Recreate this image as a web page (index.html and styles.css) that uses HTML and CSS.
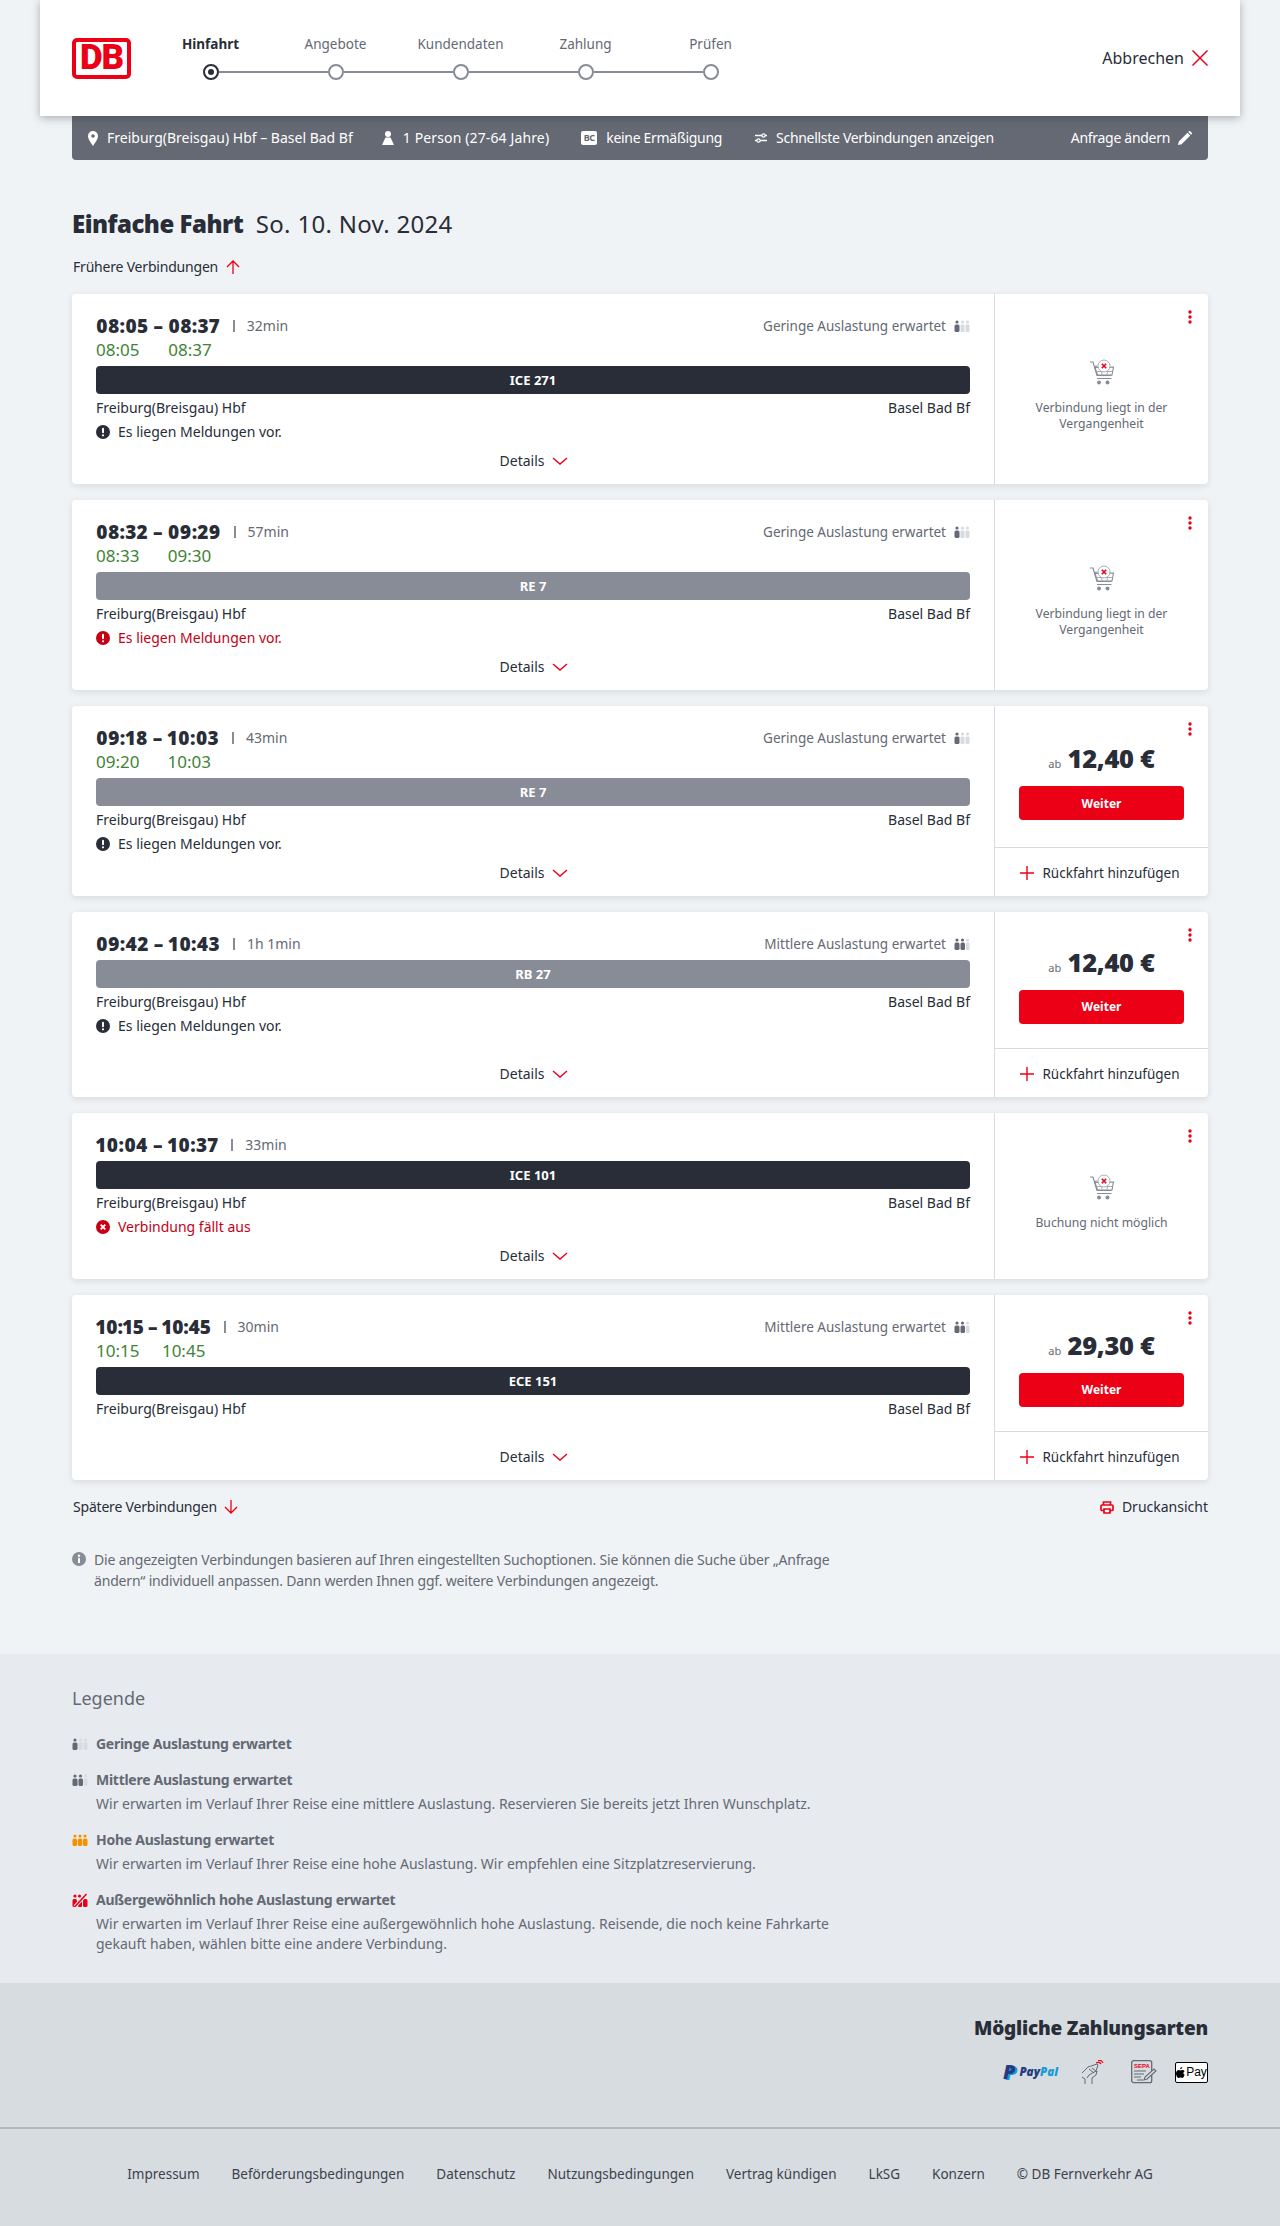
FILE: index.html
```html
<!DOCTYPE html>
<html lang="de">
<head>
    <meta charset="UTF-8">
    <meta name="viewport" content="width=device-width, initial-scale=1.0">
    <title>Einfache Fahrt</title>
    <link rel="stylesheet" href="styles.css">
</head>
<body>
    <svg class="sprites" aria-hidden="true">
        <symbol id="load-1" viewBox="0 0 16 12">
            <circle cx="3" cy="2" r="1.6" fill="#646973"/><rect x="0.5" y="4.5" width="5" height="7.5" rx="1.5" fill="#646973"/>
            <circle cx="8.5" cy="2" r="1.6" fill="#d7dce1"/><rect x="6.5" y="4.5" width="4" height="7.5" rx="1" fill="#d7dce1"/>
            <circle cx="13.5" cy="2" r="1.6" fill="#d7dce1"/><rect x="11.5" y="4.5" width="4" height="7.5" rx="1" fill="#d7dce1"/>
        </symbol>
        <symbol id="load-2" viewBox="0 0 16 12">
            <circle cx="3" cy="2" r="1.6" fill="#646973"/><rect x="0.5" y="4.5" width="5" height="7.5" rx="1.5" fill="#646973"/>
            <circle cx="8.5" cy="2" r="1.6" fill="#646973"/><rect x="6.5" y="4.5" width="4.5" height="7.5" rx="1.5" fill="#646973"/>
            <circle cx="13.5" cy="2" r="1.6" fill="#d7dce1"/><rect x="12" y="4.5" width="3.5" height="7.5" rx="1" fill="#d7dce1"/>
        </symbol>
        <symbol id="load-3" viewBox="0 0 16 12">
            <circle cx="3" cy="2" r="1.6" fill="#f39200"/><rect x="0.5" y="4.5" width="4.5" height="7.5" rx="1.5" fill="#f39200"/>
            <circle cx="8" cy="2" r="1.6" fill="#f39200"/><rect x="5.8" y="4.5" width="4.5" height="7.5" rx="1.5" fill="#f39200"/>
            <circle cx="13" cy="2" r="1.6" fill="#f39200"/><rect x="11" y="4.5" width="4.5" height="7.5" rx="1.5" fill="#f39200"/>
        </symbol>
        <symbol id="load-4" viewBox="0 0 16 14">
            <circle cx="3" cy="3" r="1.6" fill="#ec0016"/><rect x="0.5" y="6" width="4.5" height="8" rx="1.5" fill="#ec0016"/>
            <circle cx="7.5" cy="3" r="1.6" fill="#ec0016"/><rect x="6" y="7" width="4" height="7" rx="1" fill="#ec0016"/>
            <rect x="11" y="6" width="4.5" height="8" rx="1.5" fill="#ec0016"/>
            <path d="M3 13.5 14.5 1" stroke="#e7ebf0" stroke-width="3.4"/><path d="M3 13.5 14.5 1" stroke="#ec0016" stroke-width="1.6"/>
        </symbol>
        <symbol id="kebab" viewBox="0 0 4 14">
            <circle cx="2" cy="2" r="1.7" fill="#ec0016"/><circle cx="2" cy="7" r="1.7" fill="#ec0016"/><circle cx="2" cy="12" r="1.7" fill="#ec0016"/>
        </symbol>
        <symbol id="chevron" viewBox="0 0 16 8">
            <path d="M1 1l7 6 7-6" fill="none" stroke="#ec0016" stroke-width="1.4"/>
        </symbol>
        <symbol id="plus" viewBox="0 0 14 14">
            <path d="M7 0v14M0 7h14" stroke="#ec0016" stroke-width="1.4"/>
        </symbol>
        <symbol id="alert" viewBox="0 0 14 14">
            <circle cx="7" cy="7" r="7" fill="currentColor"/>
            <rect x="6" y="2.8" width="2" height="5.4" rx="1" fill="#fff"/><circle cx="7" cy="10.3" r="1.1" fill="#fff"/>
        </symbol>
        <symbol id="cancelled" viewBox="0 0 14 14">
            <circle cx="7" cy="7" r="7" fill="currentColor"/>
            <path d="M4.7 4.7l4.6 4.6M9.3 4.7L4.7 9.3" stroke="#fff" stroke-width="1.8"/>
        </symbol>
        <symbol id="cart" viewBox="0 0 26 26">
            <path d="M1 3h3l4 13.5h14.5M22.5 19.5H8" fill="none" stroke="#878c96" stroke-width="1.2"/>
            <path d="M5.5 7.5l3-.5M24.5 8l-1.5 8H8.5L6 8.500z" fill="none" stroke="#878c96" stroke-width="1.1"/>
            <path d="M7.500 12.500h15.500M12 8.500l1 7.500M19 8.500l-1 7.500" fill="none" stroke="#a8adb5" stroke-width="1"/>
            <circle cx="10" cy="23.500" r="2" fill="#878c96"/><circle cx="18.500" cy="23.500" r="2" fill="#878c96"/>
            <circle cx="15" cy="7" r="6" fill="#fff" stroke="#a8adb5"/>
            <path d="M12.800 4.800l4.400 4.400M17.200 4.800l-4.400 4.400" stroke="#ec0016" stroke-width="1.600"/>
        </symbol>
    </svg>

    <div class="top-header">
        <div class="db-logo"><span>DB</span></div>
        <div class="stepper">
            <div class="step active"><span class="step-label">Hinfahrt</span><span class="step-dot"></span></div>
            <div class="step"><span class="step-label">Angebote</span><span class="step-dot"></span></div>
            <div class="step"><span class="step-label">Kundendaten</span><span class="step-dot"></span></div>
            <div class="step"><span class="step-label">Zahlung</span><span class="step-dot"></span></div>
            <div class="step"><span class="step-label">Prüfen</span><span class="step-dot"></span></div>
        </div>
        <a class="cancel-link">Abbrechen
            <svg width="16" height="16" viewBox="0 0 16 16"><path d="M.5.5l15 15M15.500.5l-15 15" stroke="#ec0016" stroke-width="1.500"/></svg>
        </a>
    </div>

    <div class="search-bar">
        <span class="bar-item route-item">
            <svg width="10" height="15" viewBox="0 0 10 15"><path fill-rule="evenodd" d="M5 0a5 5 0 0 1 5 5c0 3-3 7-5 10C3 12 0 8 0 5a5 5 0 0 1 5-5zm0 3.200a1.800 1.800 0 1 0 0 3.600 1.800 1.800 0 0 0 0-3.600z" fill="#fff"/></svg>
            Freiburg(Breisgau) Hbf – Basel Bad Bf
        </span>
        <span class="bar-item person-item">
            <svg width="12" height="14" viewBox="0 0 12 14"><circle cx="6" cy="3" r="3" fill="#fff"/><path d="M3.500 6.500h5L12 14H0z" fill="#fff"/></svg>
            1 Person (27-64 Jahre)
        </span>
        <span class="bar-item tight-item discount-item">
            <span class="bc-badge">BC</span>
            keine Ermäßigung
        </span>
        <span class="bar-item tight-item">
            <svg width="12" height="10" viewBox="0 0 12 10"><path d="M0 2.500h7M10 2.500h2M0 7.500h2M5 7.500h7" stroke="#fff" stroke-width="1.400"/><circle cx="8.500" cy="2.500" r="1.600" fill="none" stroke="#fff" stroke-width="1.200"/><circle cx="3.500" cy="7.500" r="1.600" fill="none" stroke="#fff" stroke-width="1.200"/></svg>
            Schnellste Verbindungen anzeigen
        </span>
        <a class="bar-change">Anfrage ändern
            <svg width="14" height="14" viewBox="0 0 14 14"><path d="M0 14l.8-3.600L9.500 1.700l2.800 2.800-8.700 8.700zM10.300.9l.6-.6a1 1 0 0 1 1.400 0l1.400 1.400a1 1 0 0 1 0 1.400l-.6.600z" fill="#fff"/></svg>
        </a>
    </div>

    <main class="content">
        <h1 class="page-title"><strong>Einfache Fahrt</strong> So. 10. Nov. 2024</h1>
        <a class="page-link early-link">Frühere Verbindungen
            <svg width="14" height="14" viewBox="0 0 14 14"><path d="M7 14V1M1 7l6-6 6 6" fill="none" stroke="#ec0016" stroke-width="1.300"/></svg>
        </a>

        <div class="card-list">
            <article class="card">
                <div class="card-main">
                    <div class="card-head">
                        <div class="times">
                            <span class="time-dep">08:05 – </span><span class="time-arr">08:37</span>
                            <span class="duration">32min</span>
                            <span class="real">08:05</span><span class="real">08:37</span>
                        </div>
                        <div class="load">Geringe Auslastung erwartet <svg class="load-icon"><use href="#load-1"/></svg></div>
                    </div>
                    <div class="train dark">ICE 271</div>
                    <div class="stations"><span>Freiburg(Breisgau) Hbf</span><span>Basel Bad Bf</span></div>
                    <div class="notice"><svg class="notice-icon"><use href="#alert"/></svg>Es liegen Meldungen vor.</div>
                    <a class="details">Details <svg class="chevron"><use href="#chevron"/></svg></a>
                </div>
                <div class="card-side past">
                    <svg class="kebab"><use href="#kebab"/></svg>
                    <svg class="cart"><use href="#cart"/></svg>
                    <p>Verbindung liegt in der Vergangenheit</p>
                </div>
            </article>

            <article class="card">
                <div class="card-main">
                    <div class="card-head">
                        <div class="times">
                            <span class="time-dep">08:32 – </span><span class="time-arr">09:29</span>
                            <span class="duration">57min</span>
                            <span class="real">08:33</span><span class="real">09:30</span>
                        </div>
                        <div class="load">Geringe Auslastung erwartet <svg class="load-icon"><use href="#load-1"/></svg></div>
                    </div>
                    <div class="train grey">RE 7</div>
                    <div class="stations"><span>Freiburg(Breisgau) Hbf</span><span>Basel Bad Bf</span></div>
                    <div class="notice red"><svg class="notice-icon"><use href="#alert"/></svg>Es liegen Meldungen vor.</div>
                    <a class="details">Details <svg class="chevron"><use href="#chevron"/></svg></a>
                </div>
                <div class="card-side past">
                    <svg class="kebab"><use href="#kebab"/></svg>
                    <svg class="cart"><use href="#cart"/></svg>
                    <p>Verbindung liegt in der Vergangenheit</p>
                </div>
            </article>

            <article class="card">
                <div class="card-main">
                    <div class="card-head">
                        <div class="times">
                            <span class="time-dep">09:18 – </span><span class="time-arr">10:03</span>
                            <span class="duration">43min</span>
                            <span class="real">09:20</span><span class="real">10:03</span>
                        </div>
                        <div class="load">Geringe Auslastung erwartet <svg class="load-icon"><use href="#load-1"/></svg></div>
                    </div>
                    <div class="train grey">RE 7</div>
                    <div class="stations"><span>Freiburg(Breisgau) Hbf</span><span>Basel Bad Bf</span></div>
                    <div class="notice"><svg class="notice-icon"><use href="#alert"/></svg>Es liegen Meldungen vor.</div>
                    <a class="details">Details <svg class="chevron"><use href="#chevron"/></svg></a>
                </div>
                <div class="card-side">
                    <svg class="kebab"><use href="#kebab"/></svg>
                    <div class="offer">
                        <div class="price"><small>ab</small> 12,40 €</div>
                        <button class="btn-next">Weiter</button>
                    </div>
                    <a class="return-link"><svg class="plus"><use href="#plus"/></svg>Rückfahrt hinzufügen</a>
                </div>
            </article>

            <article class="card">
                <div class="card-main">
                    <div class="card-head">
                        <div class="times">
                            <span class="time-dep">09:42 – </span><span class="time-arr">10:43</span>
                            <span class="duration">1h 1min</span>
                        </div>
                        <div class="load">Mittlere Auslastung erwartet <svg class="load-icon"><use href="#load-2"/></svg></div>
                    </div>
                    <div class="train grey">RB 27</div>
                    <div class="stations"><span>Freiburg(Breisgau) Hbf</span><span>Basel Bad Bf</span></div>
                    <div class="notice"><svg class="notice-icon"><use href="#alert"/></svg>Es liegen Meldungen vor.</div>
                    <a class="details">Details <svg class="chevron"><use href="#chevron"/></svg></a>
                </div>
                <div class="card-side">
                    <svg class="kebab"><use href="#kebab"/></svg>
                    <div class="offer">
                        <div class="price"><small>ab</small> 12,40 €</div>
                        <button class="btn-next">Weiter</button>
                    </div>
                    <a class="return-link"><svg class="plus"><use href="#plus"/></svg>Rückfahrt hinzufügen</a>
                </div>
            </article>

            <article class="card">
                <div class="card-main">
                    <div class="card-head">
                        <div class="times">
                            <span class="time-dep">10:04 – </span><span class="time-arr">10:37</span>
                            <span class="duration">33min</span>
                        </div>
                    </div>
                    <div class="train dark">ICE 101</div>
                    <div class="stations"><span>Freiburg(Breisgau) Hbf</span><span>Basel Bad Bf</span></div>
                    <div class="notice red"><svg class="notice-icon"><use href="#cancelled"/></svg>Verbindung fällt aus</div>
                    <a class="details">Details <svg class="chevron"><use href="#chevron"/></svg></a>
                </div>
                <div class="card-side past">
                    <svg class="kebab"><use href="#kebab"/></svg>
                    <svg class="cart"><use href="#cart"/></svg>
                    <p>Buchung nicht möglich</p>
                </div>
            </article>

            <article class="card">
                <div class="card-main">
                    <div class="card-head">
                        <div class="times narrow-times">
                            <span class="time-dep">10:15 – </span><span class="time-arr">10:45</span>
                            <span class="duration">30min</span>
                            <span class="real">10:15</span><span class="real">10:45</span>
                        </div>
                        <div class="load">Mittlere Auslastung erwartet <svg class="load-icon"><use href="#load-2"/></svg></div>
                    </div>
                    <div class="train dark">ECE 151</div>
                    <div class="stations"><span>Freiburg(Breisgau) Hbf</span><span>Basel Bad Bf</span></div>
                    <a class="details">Details <svg class="chevron"><use href="#chevron"/></svg></a>
                </div>
                <div class="card-side">
                    <svg class="kebab"><use href="#kebab"/></svg>
                    <div class="offer">
                        <div class="price"><small>ab</small> 29,30 €</div>
                        <button class="btn-next">Weiter</button>
                    </div>
                    <a class="return-link"><svg class="plus"><use href="#plus"/></svg>Rückfahrt hinzufügen</a>
                </div>
            </article>
        </div>

        <div class="below-cards">
            <a class="page-link">Spätere Verbindungen
                <svg width="14" height="14" viewBox="0 0 14 14"><path d="M7 0v13M1 7l6 6 6-6" fill="none" stroke="#ec0016" stroke-width="1.300"/></svg>
            </a>
            <a class="print-link">
                <svg width="14" height="13" viewBox="0 0 14 13"><path d="M3.500 4V1h7v3M3.500 9.500H2A1 1 0 0 1 1 8.500V5a1 1 0 0 1 1-1h10a1 1 0 0 1 1 1v3.500a1 1 0 0 1-1 1h-1.500M4 8h6v4H4z" fill="none" stroke="#ec0016" stroke-width="1.700"/></svg>
                Druckansicht
            </a>
        </div>

        <div class="info-note">
            <svg width="14" height="14" viewBox="0 0 14 14"><circle cx="7" cy="7" r="7" fill="#878c96"/><circle cx="7" cy="3.700" r="1.200" fill="#fff"/><rect x="6" y="5.800" width="2" height="5.500" rx=".8" fill="#fff"/></svg>
            <p>Die angezeigten Verbindungen basieren auf Ihren eingestellten Suchoptionen. Sie können die Suche über „Anfrage ändern“ individuell anpassen. Dann werden Ihnen ggf. weitere Verbindungen angezeigt.</p>
        </div>
    </main>

    <section class="legend">
        <h2>Legende</h2>
        <div class="legend-item">
            <svg class="legend-icon"><use href="#load-1"/></svg>
            <div><h3>Geringe Auslastung erwartet</h3></div>
        </div>
        <div class="legend-item">
            <svg class="legend-icon"><use href="#load-2"/></svg>
            <div><h3>Mittlere Auslastung erwartet</h3><p>Wir erwarten im Verlauf Ihrer Reise eine mittlere Auslastung. Reservieren Sie bereits jetzt Ihren Wunschplatz.</p></div>
        </div>
        <div class="legend-item">
            <svg class="legend-icon"><use href="#load-3"/></svg>
            <div><h3>Hohe Auslastung erwartet</h3><p>Wir erwarten im Verlauf Ihrer Reise eine hohe Auslastung. Wir empfehlen eine Sitzplatzreservierung.</p></div>
        </div>
        <div class="legend-item">
            <svg class="legend-icon"><use href="#load-4"/></svg>
            <div><h3>Außergewöhnlich hohe Auslastung erwartet</h3><p>Wir erwarten im Verlauf Ihrer Reise eine außergewöhnlich hohe Auslastung. Reisende, die noch keine Fahrkarte gekauft haben, wählen bitte eine andere Verbindung.</p></div>
        </div>
    </section>

    <section class="payments">
        <h2>Mögliche Zahlungsarten</h2>
        <div class="pay-icons">
            <span class="paypal"><span class="pp-mark">P</span><b>Pay</b><i>Pal</i></span>
            <svg class="pay-contactless" width="23" height="24" viewBox="0 0 23 24"><g fill="none" stroke="#646973" stroke-width="1"><path d="M1 13l6-6 9-3 1 1-2 6-7 4-2 3"/><path d="M4 24v-5l-3-2M11 24v-6l4-3 1-4M8 9l5 4M11 8l5 4"/></g><path d="M15 3c2-1 4-1 5 1M17 .8c2-.8 4 0 5 2" fill="none" stroke="#ec0016" stroke-width="1.200"/></svg>
            <svg class="pay-sepa" width="26" height="24" viewBox="0 0 26 24"><rect x=".7" y=".7" width="20" height="22" rx="2" fill="none" stroke="#646973" stroke-width="1.300"/><text x="3" y="8" class="sepa-text">SEPA</text><path d="M3 11h12M3 14h10M3 17h7M6 20h6" stroke="#646973"/><path d="M13 20l1-3 9-8 2 2-9 8z" fill="#d7dce1" stroke="#646973" stroke-width="1.100"/></svg>
            <span class="applepay">
                <svg width="9" height="11" viewBox="0 0 9 11"><path d="M6.300 0c.1 1.200-1 2.400-2.200 2.300C4 1.200 5.100.1 6.300 0zM8.700 7.700C8.200 9 7.200 11 6.100 11c-.7 0-1-.4-1.800-.4s-1.100.4-1.800.4C1.300 11 0 8.600 0 6.500 0 4.300 1.400 3 2.700 3c.8 0 1.300.5 1.800.5S5.400 3 6.300 3c.5 0 1.700.2 2.300 1.200-1.800 1-1.500 3 .1 3.500z" fill="#000"/></svg>Pay
            </span>
        </div>
    </section>

    <footer class="site-footer">
        <a>Impressum</a>
        <a>Beförderungsbedingungen</a>
        <a>Datenschutz</a>
        <a>Nutzungsbedingungen</a>
        <a>Vertrag kündigen</a>
        <a>LkSG</a>
        <a>Konzern</a>
        <a>© DB Fernverkehr AG</a>
    </footer>
</body>
</html>
```

FILE: styles.css
```css
* {
    box-sizing: border-box;
}
body {
    margin: 0;
    font-family: "Noto Sans", Arial, sans-serif;
    font-size: 14px;
    line-height: 20px;
    color: #282d37;
    background-color: #f0f3f5;
}
h1, h2, h3, p {
    margin: 0;
}
.sprites {
    display: none;
}

/* header */
.top-header {
    position: relative;
    z-index: 2;
    display: flex;
    align-items: center;
    height: 116px;
    margin: 0 40px;
    padding: 0 32px;
    background-color: #fff;
    box-shadow: 0 2px 8px rgba(40, 45, 55, 0.35);
}
.db-logo {
    display: flex;
    align-items: center;
    justify-content: center;
    width: 59px;
    height: 41px;
    border: 4.5px solid #ec0016;
    border-radius: 5px;
    font-family: Roboto, sans-serif;
    font-size: 35px;
    font-weight: 900;
    letter-spacing: -1px;
    color: #ec0016;
}
.stepper {
    display: grid;
    grid-template-columns: repeat(5, 125px);
    margin-left: 17px;
    margin-top: -2px;
    font-size: 13.5px;
}
.step {
    position: relative;
    display: flex;
    flex-direction: column;
    align-items: center;
    gap: 10px;
    color: #646973;
}
.step.active {
    color: #282d37;
    font-weight: 700;
}
.step-dot {
    position: relative;
    width: 16px;
    height: 16px;
    border: 2px solid #878c96;
    border-radius: 50%;
    background-color: #fff;
}
.step:not(:last-child) .step-dot::after {
    content: "";
    position: absolute;
    left: 14px;
    top: 5px;
    width: 109px;
    height: 2px;
    background-color: #878c96;
}
.step.active .step-dot {
    border-color: #282d37;
}
.step.active .step-dot::before {
    content: "";
    position: absolute;
    left: 3px;
    top: 3px;
    width: 6px;
    height: 6px;
    border-radius: 50%;
    background-color: #282d37;
}
.cancel-link {
    display: flex;
    align-items: center;
    gap: 8px;
    margin-left: auto;
    font-size: 16px;
}

/* search summary */
.search-bar {
    display: flex;
    align-items: center;
    height: 44px;
    margin: 0 72px;
    padding: 0 16px;
    background-color: #646973;
    border-radius: 0 0 4px 4px;
    color: #fff;
}
.bar-item {
    display: flex;
    align-items: center;
    gap: 9px;
    margin-right: 32px;
}
.route-item {
    margin-right: 29px;
}
.person-item {
    letter-spacing: 0.13px;
}
.tight-item {
    letter-spacing: -0.3px;
}
.discount-item {
    margin-right: 33px;
}
.bar-change {
    display: flex;
    align-items: center;
    gap: 8px;
    margin-left: auto;
    letter-spacing: -0.3px;
}
.bc-badge {
    width: 16px;
    height: 14px;
    border-radius: 2px;
    background-color: #fff;
    color: #646973;
    font-size: 9px;
    font-weight: 700;
    line-height: 14px;
    text-align: center;
}

/* content */
.content {
    padding: 48px 72px 63px;
}
.page-title {
    font-size: 24px;
    font-weight: 400;
    line-height: 32px;
    letter-spacing: 0.3px;
}
.page-title strong {
    font-weight: 900;
    letter-spacing: -0.5px;
    margin-right: 6px;
}
.page-link {
    display: inline-flex;
    align-items: center;
    gap: 7px;
    margin-left: 1px;
    letter-spacing: -0.2px;
}
.early-link {
    gap: 8px;
    margin-top: 17px;
}
.print-link {
    display: inline-flex;
    align-items: center;
    gap: 8px;
}
.card-list {
    display: flex;
    flex-direction: column;
    gap: 16px;
    margin-top: 17px;
}
.card {
    display: flex;
    background-color: #fff;
    border-radius: 4px;
    box-shadow: 0 2px 6px rgba(40, 45, 55, 0.12);
}
.card-main {
    display: flex;
    flex-direction: column;
    width: 923px;
    padding: 20px 24px 13px;
    border-right: 1px solid #d7dce1;
}
.card-head {
    display: flex;
    justify-content: space-between;
}
.times {
    display: grid;
    grid-template-columns: auto auto auto;
    justify-content: start;
}
.time-dep, .time-arr {
    font-size: 19px;
    font-weight: 900;
    font-variant-numeric: proportional-nums;
    line-height: 24px;
    letter-spacing: 0.2px;
    white-space: pre;
}
.narrow-times .time-dep, .narrow-times .time-arr {
    letter-spacing: -0.3px;
}
.duration {
    margin-left: 13px;
    padding-left: 14px;
    color: #646973;
    line-height: 24px;
    background: linear-gradient(#878c96, #878c96) no-repeat 0 6px / 2px 12px;
}
.real {
    font-size: 17px;
    line-height: 24px;
    color: #408335;
}
.times .real:first-of-type {
    grid-column: 1;
}
.load {
    display: flex;
    align-items: center;
    gap: 8px;
    height: 24px;
    font-size: 13.5px;
    color: #646973;
}
.load-icon {
    width: 16px;
    height: 12px;
}
.train {
    height: 28px;
    margin-top: 4px;
    border-radius: 4px;
    color: #fff;
    font-size: 13px;
    font-weight: 700;
    line-height: 28px;
    text-align: center;
}
.train.dark {
    background-color: #282d37;
}
.train.grey {
    background-color: #878c96;
}
.stations {
    display: flex;
    justify-content: space-between;
    margin-top: 4px;
}
.notice {
    display: flex;
    align-items: center;
    gap: 8px;
    margin-top: 4px;
}
.notice.red {
    color: #c50014;
}
.notice-icon {
    width: 14px;
    height: 14px;
}
.details {
    display: flex;
    align-items: center;
    justify-content: center;
    gap: 8px;
    margin-top: auto;
    padding-top: 9px;
    padding-left: 2px;
}
.chevron {
    width: 16px;
    height: 8px;
}
.card-side {
    position: relative;
    display: flex;
    flex-direction: column;
    flex: 1;
}
.kebab {
    position: absolute;
    right: 16px;
    top: 16px;
    width: 4px;
    height: 14px;
}
.card-side.past {
    align-items: center;
    justify-content: center;
    padding: 12px 24px 0;
    color: #646973;
}
.cart {
    width: 26px;
    height: 26px;
}
.past p {
    margin-top: 15px;
    font-size: 12.2px;
    line-height: 16px;
    text-align: center;
}
.offer {
    display: flex;
    flex-direction: column;
    justify-content: center;
    flex: 1;
    min-height: 136px;
    padding: 9px 24px 0;
}
.price {
    height: 34px;
    margin-top: -1px;
    font-size: 25.5px;
    font-weight: 900;
    line-height: 34px;
    letter-spacing: -0.3px;
    text-align: center;
    white-space: nowrap;
}
.price small {
    font-size: 11px;
    font-weight: 400;
    letter-spacing: 0;
    color: #646973;
}
.btn-next {
    height: 34px;
    margin-top: 11px;
    border: none;
    border-radius: 4px;
    background-color: #ec0016;
    color: #fff;
    font-family: inherit;
    font-size: 12px;
    font-weight: 700;
    cursor: pointer;
}
.return-link {
    display: flex;
    align-items: center;
    justify-content: center;
    gap: 8px;
    height: 49px;
    padding: 2px 3px 0 0;
    border-top: 1px solid #d7dce1;
    font-size: 13.5px;
}
.plus {
    width: 14px;
    height: 14px;
}
.below-cards {
    display: flex;
    justify-content: space-between;
    margin-top: 17px;
}
.info-note {
    display: flex;
    gap: 8px;
    width: 770px;
    margin-top: 32px;
    color: #646973;
    line-height: 21px;
    letter-spacing: -0.18px;
}
.info-note svg {
    flex-shrink: 0;
    margin-top: 3px;
}

/* legend */
.legend {
    padding: 32px 72px 29px;
    background-color: #e7ebf0;
    color: #646973;
}
.legend h2 {
    font-size: 18px;
    font-weight: 400;
    line-height: 24px;
    margin-bottom: 24px;
}
.legend-item {
    display: flex;
    gap: 8px;
    width: 760px;
    margin-bottom: 16px;
}
.legend-item:last-child {
    margin-bottom: 0;
}
.legend-item h3 {
    font-size: 14px;
    font-weight: 700;
    line-height: 20px;
    letter-spacing: -0.27px;
}
.legend-item p {
    margin-top: 4px;
}
.legend-icon {
    flex-shrink: 0;
    width: 16px;
    height: 14px;
    margin-top: 3px;
}

/* payments and footer */
.payments {
    height: 146px;
    padding: 31px 72px 0;
    background-color: #d7dce1;
    border-bottom: 2px solid #b4b9be;
}
.payments h2 {
    font-size: 19px;
    font-weight: 900;
    line-height: 28px;
    letter-spacing: -0.2px;
    text-align: right;
}
.pay-icons {
    display: flex;
    align-items: center;
    justify-content: flex-end;
    gap: 23px;
    height: 24px;
    margin-top: 18px;
}
.pay-sepa {
    margin-left: 4px;
}
.applepay {
    margin-left: -5px;
}
.paypal {
    display: flex;
    align-items: center;
    font-family: "Open Sans", sans-serif;
    font-size: 11.6px;
    font-style: italic;
    font-weight: 800;
}
.paypal b {
    color: #253b80;
}
.paypal i {
    color: #179bd7;
}
.pp-mark {
    margin-right: 4px;
    font-size: 20px;
    line-height: 20px;
    color: #253b80;
    text-shadow: 2px 1px 0 #179bd7;
}
.sepa-text {
    font-family: "Liberation Sans", sans-serif;
    font-size: 6px;
    font-weight: 700;
    fill: #ec0016;
}
.applepay {
    display: flex;
    align-items: center;
    justify-content: center;
    gap: 1px;
    width: 33px;
    height: 21px;
    border: 1px solid #000;
    border-radius: 2px;
    background-color: #fff;
    color: #000;
    font-size: 12px;
    font-family: "Liberation Sans", sans-serif;
}
.site-footer {
    display: flex;
    justify-content: center;
    gap: 32px;
    height: 97px;
    padding-top: 35px;
    background-color: #d7dce1;
    color: #3c414b;
    font-size: 13.5px;
}
```
